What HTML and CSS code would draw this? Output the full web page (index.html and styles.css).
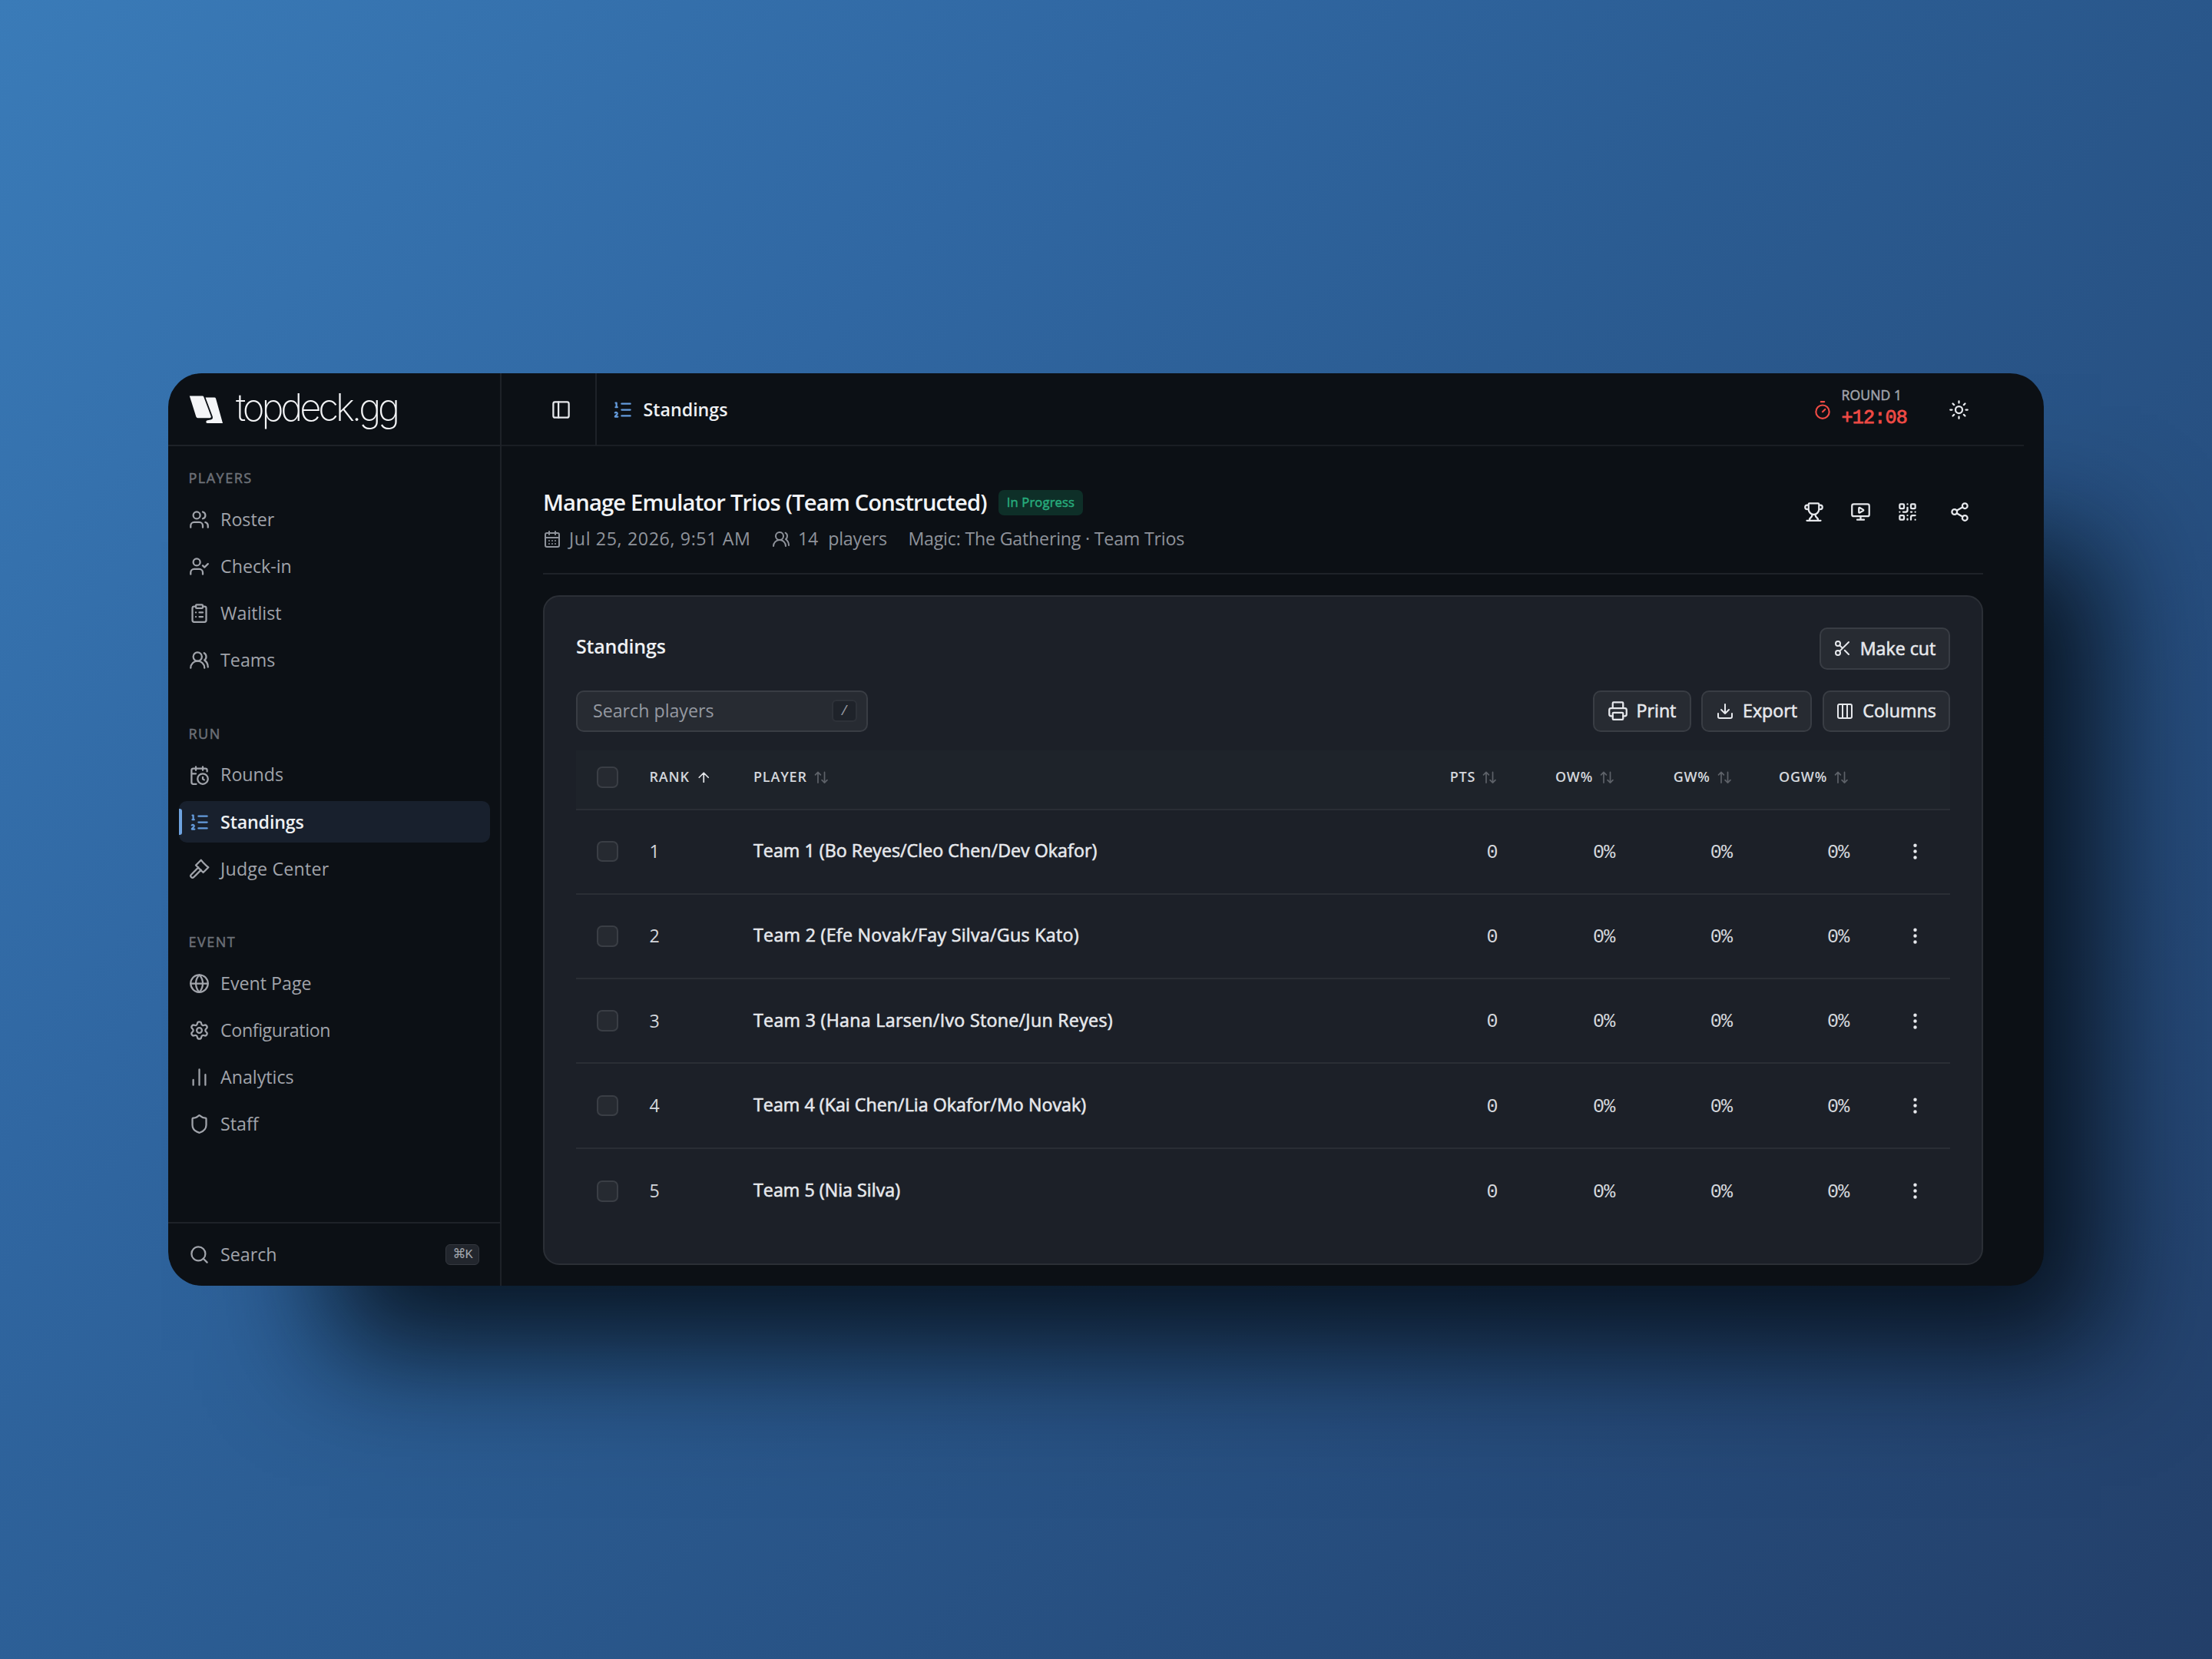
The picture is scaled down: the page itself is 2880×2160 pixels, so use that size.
FILE: index.html
```
<!DOCTYPE html>
<html lang="en">
<head>
    <meta charset="UTF-8">
    <meta name="viewport" content="width=device-width, initial-scale=1.0">
    <title>Standings - topdeck.gg</title>
    <link rel="stylesheet" href="styles.css">
</head>
<body>
    <!-- Icon sprite -->
    <svg class="sprite" xmlns="http://www.w3.org/2000/svg">
        <symbol id="i-users" viewBox="0 0 24 24"><path d="M16 21v-2a4 4 0 0 0-4-4H6a4 4 0 0 0-4 4v2M16 3.13a4 4 0 0 1 0 7.75M22 21v-2a4 4 0 0 0-3-3.87"/><circle cx="9" cy="7" r="4"/></symbol>
        <symbol id="i-user-check" viewBox="0 0 24 24"><path d="m16 11 2 2 4-4M16 21v-2a4 4 0 0 0-4-4H6a4 4 0 0 0-4 4v2"/><circle cx="9" cy="7" r="4"/></symbol>
        <symbol id="i-clipboard" viewBox="0 0 24 24"><rect width="8" height="4" x="8" y="2" rx="1"/><path d="M16 4h2a2 2 0 0 1 2 2v14a2 2 0 0 1-2 2H6a2 2 0 0 1-2-2V6a2 2 0 0 1 2-2h2M12 11h4M12 16h4M8 11h.01M8 16h.01"/></symbol>
        <symbol id="i-teams" viewBox="0 0 24 24"><path d="M18 21a8 8 0 0 0-16 0"/><circle cx="10" cy="8" r="5"/><path d="M22 20c0-3.37-2-6.5-4-8a5 5 0 0 0-.45-8.3"/></symbol>
        <symbol id="i-calendar-clock" viewBox="0 0 24 24"><path d="M16 14v2.2l1.6 1M16 2v4M21 7.5V6a2 2 0 0 0-2-2H5a2 2 0 0 0-2 2v14a2 2 0 0 0 2 2h3.5M3 10h5M8 2v4"/><circle cx="16" cy="16" r="6"/></symbol>
        <symbol id="i-list" viewBox="0 0 24 24"><path d="M11 5h10M11 12h10M11 19h10M4 4h1v5M4 9h2M6.5 20H3.4c0-1 2.6-1.925 2.6-3.5a1.5 1.5 0 0 0-2.6-1.02"/></symbol>
        <symbol id="i-gavel" viewBox="0 0 24 24"><path d="m14 13-8.381 8.38a1 1 0 0 1-3.001-3L11 9.999M15.973 4.027A13 13 0 0 0 14 1.5L8 7.5l8.5 8.5 6-6a13 13 0 0 1-2.5-2z"/></symbol>
        <symbol id="i-globe" viewBox="0 0 24 24"><circle cx="12" cy="12" r="10"/><path d="M12 2a14.5 14.5 0 0 0 0 20 14.5 14.5 0 0 0 0-20M2 12h20"/></symbol>
        <symbol id="i-settings" viewBox="0 0 24 24"><path d="M9.671 4.136a2.34 2.34 0 0 1 4.659 0 2.34 2.34 0 0 0 3.319 1.915 2.34 2.34 0 0 1 2.33 4.033 2.34 2.34 0 0 0 0 3.831 2.34 2.34 0 0 1-2.33 4.033 2.34 2.34 0 0 0-3.319 1.915 2.34 2.34 0 0 1-4.659 0 2.34 2.34 0 0 0-3.32-1.915 2.34 2.34 0 0 1-2.33-4.033 2.34 2.34 0 0 0 0-3.831A2.34 2.34 0 0 1 6.35 6.051a2.34 2.34 0 0 0 3.319-1.915"/><circle cx="12" cy="12" r="3"/></symbol>
        <symbol id="i-chart" viewBox="0 0 24 24"><path d="M5 21v-6M12 21V3M19 21V9"/></symbol>
        <symbol id="i-shield" viewBox="0 0 24 24"><path d="M20 13c0 5-3.5 7.5-7.66 8.95a1 1 0 0 1-.67-.01C7.5 20.5 4 18 4 13V6a1 1 0 0 1 1-1c2 0 4.5-1.2 6.24-2.72a1.17 1.17 0 0 1 1.52 0C14.51 3.81 17 5 19 5a1 1 0 0 1 1 1z"/></symbol>
        <symbol id="i-search" viewBox="0 0 24 24"><path d="m21 21-4.34-4.34"/><circle cx="11" cy="11" r="8"/></symbol>
        <symbol id="i-panel" viewBox="0 0 24 24"><rect width="18" height="18" x="3" y="3" rx="2"/><path d="M9 3v18"/></symbol>
        <symbol id="i-timer" viewBox="0 0 24 24"><path d="M10 2h4M12 14l3-3"/><circle cx="12" cy="14" r="8"/></symbol>
        <symbol id="i-sun" viewBox="0 0 24 24"><circle cx="12" cy="12" r="4"/><path d="M12 2v2M12 20v2M4.93 4.93l1.41 1.41M17.66 17.66l1.41 1.41M2 12h2M20 12h2M6.34 17.66l-1.41 1.41M19.07 4.93l-1.41 1.41"/></symbol>
        <symbol id="i-trophy" viewBox="0 0 24 24"><path d="M10 14.66v1.626a2 2 0 0 1-.976 1.696A5 5 0 0 0 7 21.978M14 14.66v1.626a2 2 0 0 0 .976 1.696A5 5 0 0 1 17 21.978M18 9h1.5a1 1 0 0 0 0-5H18M4 22h16M6 9a6 6 0 0 0 12 0V3a1 1 0 0 0-1-1H7a1 1 0 0 0-1 1zM6 9H4.5a1 1 0 0 1 0-5H6"/></symbol>
        <symbol id="i-monitor" viewBox="0 0 24 24"><path d="M15.033 9.44a.647.647 0 0 1 0 1.12l-4.065 2.352a.645.645 0 0 1-.968-.56V7.648a.645.645 0 0 1 .967-.56zM12 17v4M8 21h8"/><rect x="2" y="3" width="20" height="14" rx="2"/></symbol>
        <symbol id="i-qr" viewBox="0 0 24 24"><rect width="5" height="5" x="3" y="3" rx="1"/><rect width="5" height="5" x="16" y="3" rx="1"/><rect width="5" height="5" x="3" y="16" rx="1"/><path d="M21 16h-3a2 2 0 0 0-2 2v3M21 21v.01M12 7v3a2 2 0 0 1-2 2H7M3 12h.01M12 3h.01M12 16v.01M16 12h1M21 12v.01M12 21v-1"/></symbol>
        <symbol id="i-share" viewBox="0 0 24 24"><circle cx="18" cy="5" r="3"/><circle cx="6" cy="12" r="3"/><circle cx="18" cy="19" r="3"/><path d="m8.59 13.51 6.83 3.98M15.41 6.51l-6.82 3.98"/></symbol>
        <symbol id="i-calendar" viewBox="0 0 24 24"><path d="M8 2v4M16 2v4M3 10h18M8 14h.01M12 14h.01M16 14h.01M8 18h.01M12 18h.01M16 18h.01"/><rect width="18" height="18" x="3" y="4" rx="2"/></symbol>
        <symbol id="i-scissors" viewBox="0 0 24 24"><circle cx="6" cy="6" r="3"/><path d="M8.12 8.12 12 12M20 4 8.12 15.88M14.8 14.8 20 20"/><circle cx="6" cy="18" r="3"/></symbol>
        <symbol id="i-print" viewBox="0 0 24 24"><path d="M6 18H4a2 2 0 0 1-2-2v-5a2 2 0 0 1 2-2h16a2 2 0 0 1 2 2v5a2 2 0 0 1-2 2h-2M6 9V3a1 1 0 0 1 1-1h10a1 1 0 0 1 1 1v6"/><rect x="6" y="14" width="12" height="8" rx="1"/></symbol>
        <symbol id="i-download" viewBox="0 0 24 24"><path d="M12 15V3M21 15v4a2 2 0 0 1-2 2H5a2 2 0 0 1-2-2v-4M7 10l5 5 5-5"/></symbol>
        <symbol id="i-columns" viewBox="0 0 24 24"><rect width="18" height="18" x="3" y="3" rx="2"/><path d="M9 3v18M15 3v18"/></symbol>
        <symbol id="i-arrow-up" viewBox="0 0 24 24"><path d="m5 12 7-7 7 7M12 19V5"/></symbol>
        <symbol id="i-sort" viewBox="0 0 24 24"><path d="m3 8 4-4 4 4M7 4v16M21 16l-4 4-4-4M17 20V4"/></symbol>
        <symbol id="i-dots" viewBox="0 0 24 24"><circle cx="12" cy="12" r="1"/><circle cx="12" cy="5" r="1"/><circle cx="12" cy="19" r="1"/></symbol>
    </svg>

    <div class="window">
        <aside class="sidebar">
            <div class="brand">
                <svg class="brand-mark" viewBox="0 0 44 37"><path d="M0.8 0.5H17.5Q18.8 0.5 19.3 1.8L28.8 27.2Q29 29.3 27.2 29.3H11.5Q9.9 29.3 9.3 27.6Z"/><path d="M21.5 2.5H33.2Q34.5 2.5 35 3.8L44 36H24Q22 36 22.3 33.8Q22.6 32 25.5 32Q32.2 31.6 30.8 27.2Z"/></svg>
                <span class="brand-name">topdeck.gg</span>
            </div>
            <nav class="nav">
                <div class="nav-group">
                    <div class="nav-label">PLAYERS</div>
                    <a class="nav-item"><svg class="icon"><use href="#i-users"/></svg>Roster</a>
                    <a class="nav-item"><svg class="icon"><use href="#i-user-check"/></svg>Check-in</a>
                    <a class="nav-item"><svg class="icon"><use href="#i-clipboard"/></svg>Waitlist</a>
                    <a class="nav-item"><svg class="icon"><use href="#i-teams"/></svg>Teams</a>
                </div>
                <div class="nav-group">
                    <div class="nav-label">RUN</div>
                    <a class="nav-item"><svg class="icon"><use href="#i-calendar-clock"/></svg>Rounds</a>
                    <a class="nav-item active"><svg class="icon"><use href="#i-list"/></svg>Standings</a>
                    <a class="nav-item wide"><svg class="icon"><use href="#i-gavel"/></svg>Judge Center</a>
                </div>
                <div class="nav-group">
                    <div class="nav-label">EVENT</div>
                    <a class="nav-item"><svg class="icon"><use href="#i-globe"/></svg>Event Page</a>
                    <a class="nav-item tight"><svg class="icon"><use href="#i-settings"/></svg>Configuration</a>
                    <a class="nav-item"><svg class="icon"><use href="#i-chart"/></svg>Analytics</a>
                    <a class="nav-item"><svg class="icon"><use href="#i-shield"/></svg>Staff</a>
                </div>
            </nav>
            <div class="sidebar-footer">
                <svg class="icon"><use href="#i-search"/></svg>
                <span>Search</span>
                <kbd class="kbd">⌘K</kbd>
            </div>
        </aside>

        <main class="main">
            <header class="topbar">
                <div class="toggle"><svg class="icon"><use href="#i-panel"/></svg></div>
                <div class="crumb"><svg class="icon"><use href="#i-list"/></svg>Standings</div>
                <div class="round">
                    <svg class="icon"><use href="#i-timer"/></svg>
                    <div class="round-text">
                        <span class="round-label">ROUND 1</span>
                        <span class="round-time">+12:08</span>
                    </div>
                </div>
                <svg class="icon"><use href="#i-sun"/></svg>
            </header>

            <section class="content">
                <div class="page-header">
                    <div class="heading">
                        <div class="title-row">
                            <h1>Manage Emulator Trios (Team Constructed)</h1>
                            <span class="badge">In Progress</span>
                        </div>
                        <div class="meta">
                            <span class="meta-item date"><svg class="icon small"><use href="#i-calendar"/></svg>Jul 25, 2026, 9:51 AM</span>
                            <span class="meta-item count"><svg class="icon small"><use href="#i-teams"/></svg><span>14</span><span>players</span></span>
                            <span class="meta-item">Magic: The Gathering · Team Trios</span>
                        </div>
                    </div>
                    <div class="actions">
                        <span class="action"><svg class="icon"><use href="#i-trophy"/></svg></span>
                        <span class="action"><svg class="icon"><use href="#i-monitor"/></svg></span>
                        <span class="action"><svg class="icon"><use href="#i-qr"/></svg></span>
                        <span class="action last"><svg class="icon"><use href="#i-share"/></svg></span>
                    </div>
                </div>

                <div class="card">
                    <div class="card-header">
                        <h2>Standings</h2>
                        <button class="btn"><svg class="icon small"><use href="#i-scissors"/></svg>Make cut</button>
                    </div>
                    <div class="toolbar">
                        <div class="search">Search players<kbd class="slash">/</kbd></div>
                        <div class="btn-group">
                            <button class="btn print"><svg class="icon"><use href="#i-print"/></svg>Print</button>
                            <button class="btn export"><svg class="icon small"><use href="#i-download"/></svg>Export</button>
                            <button class="btn columns"><svg class="icon small"><use href="#i-columns"/></svg>Columns</button>
                        </div>
                    </div>

                    <div class="table">
                        <div class="row head">
                            <span class="check"></span>
                            <span class="th">RANK<svg class="sort on"><use href="#i-arrow-up"/></svg></span>
                            <span class="th">PLAYER<svg class="sort"><use href="#i-sort"/></svg></span>
                            <span class="th num">PTS<svg class="sort"><use href="#i-sort"/></svg></span>
                            <span class="th num">OW%<svg class="sort"><use href="#i-sort"/></svg></span>
                            <span class="th num">GW%<svg class="sort"><use href="#i-sort"/></svg></span>
                            <span class="th num">OGW%<svg class="sort"><use href="#i-sort"/></svg></span>
                            <span></span>
                        </div>
                        <div class="row">
                            <span class="check"></span><span class="rank">1</span><span class="player snug">Team 1 (Bo Reyes/Cleo Chen/Dev Okafor)</span>
                            <span class="val">0</span><span class="val">0%</span><span class="val">0%</span><span class="val">0%</span>
                            <svg class="icon more"><use href="#i-dots"/></svg>
                        </div>
                        <div class="row">
                            <span class="check"></span><span class="rank">2</span><span class="player">Team 2 (Efe Novak/Fay Silva/Gus Kato)</span>
                            <span class="val">0</span><span class="val">0%</span><span class="val">0%</span><span class="val">0%</span>
                            <svg class="icon more"><use href="#i-dots"/></svg>
                        </div>
                        <div class="row">
                            <span class="check"></span><span class="rank">3</span><span class="player">Team 3 (Hana Larsen/Ivo Stone/Jun Reyes)</span>
                            <span class="val">0</span><span class="val">0%</span><span class="val">0%</span><span class="val">0%</span>
                            <svg class="icon more"><use href="#i-dots"/></svg>
                        </div>
                        <div class="row">
                            <span class="check"></span><span class="rank">4</span><span class="player snug">Team 4 (Kai Chen/Lia Okafor/Mo Novak)</span>
                            <span class="val">0</span><span class="val">0%</span><span class="val">0%</span><span class="val">0%</span>
                            <svg class="icon more"><use href="#i-dots"/></svg>
                        </div>
                        <div class="row">
                            <span class="check"></span><span class="rank">5</span><span class="player snug">Team 5 (Nia Silva)</span>
                            <span class="val">0</span><span class="val">0%</span><span class="val">0%</span><span class="val">0%</span>
                            <svg class="icon more"><use href="#i-dots"/></svg>
                        </div>
                    </div>
                </div>
            </section>
        </main>
    </div>
</body>
</html>
```
FILE: styles.css
```
/* General Styles */
* {
    box-sizing: border-box;
}

body {
    margin: 0;
    width: 2880px;
    height: 2160px;
    display: flex;
    align-items: center;
    justify-content: center;
    overflow: hidden;
    font-family: "Open Sans", "Noto Sans", sans-serif;
    font-size: 23.2px;
    line-height: 1;
    color: #e6e8ec;
    background: linear-gradient(135deg, #3a7bb8 0%, #3067a2 30%, #2b5c92 48%, #264c7c 76%, #233f69 100%);
}

h1, h2 {
    margin: 0;
    font-weight: 600;
}

.sprite {
    display: none;
}

.icon {
    width: 27px;
    height: 27px;
    flex: none;
    fill: none;
    stroke: currentColor;
    stroke-width: 2;
    stroke-linecap: round;
    stroke-linejoin: round;
}

.icon.small {
    width: 24px;
    height: 24px;
}

/* Window */
.window {
    display: flex;
    width: 2442px;
    height: 1188px;
    border-radius: 44px;
    background: #0c1015;
    overflow: hidden;
    box-shadow: 142px 152px 146px -68px rgba(2, 8, 14, 0.84);
}

/* Sidebar */
.sidebar {
    width: 434px;
    display: flex;
    flex-direction: column;
    border-right: 2px solid #1e2228;
}

.brand {
    height: 95px;
    display: flex;
    align-items: center;
    padding: 0 0 0 27px;
    border-bottom: 2px solid #1e2228;
}

.brand-mark {
    width: 44px;
    height: 37px;
    margin-top: 1px;
    fill: #f4f5f7;
}

.brand-name {
    margin: -5px 0 0 17px;
    font-family: Inter, sans-serif;
    font-weight: 200;
    font-size: 49px;
    letter-spacing: -4.1px;
    color: #f4f5f7;
}

.nav {
    flex: 1;
    padding: 14px 13px 0 14px;
    display: flex;
    flex-direction: column;
    gap: 40.7px;
}

.nav-group {
    display: flex;
    flex-direction: column;
    gap: 6.8px;
}

.nav-label {
    height: 54.3px;
    margin-bottom: -6.8px;
    padding-left: 12.5px;
    display: flex;
    align-items: center;
    font-size: 18px;
    letter-spacing: 1.5px;
    -webkit-text-stroke: 0.5px currentColor;
    color: #6d7178;
}

.nav-item {
    height: 54.3px;
    padding-left: 12.5px;
    display: flex;
    align-items: center;
    gap: 14.6px;
    border-radius: 10px;
    color: #a1a4ab;
}

.nav-item.tight {
    letter-spacing: -0.38px;
}

.nav-item.wide {
    letter-spacing: 0.2px;
}

.nav-item.active {
    position: relative;
    background: #18202d;
    color: #eef0f3;
    font-weight: 600;
    letter-spacing: -0.15px;
}

.nav-item.active .icon,
.crumb .icon {
    color: #649bdc;
}

.nav-item.active::before {
    content: "";
    position: absolute;
    left: 0;
    top: 10px;
    width: 4px;
    height: 34px;
    border-radius: 0 3px 3px 0;
    background: #6fa3e0;
}

.sidebar-footer {
    height: 83px;
    padding: 0 27px 0 26.5px;
    display: flex;
    align-items: center;
    gap: 14.6px;
    border-top: 2px solid #1e2228;
    color: #a1a4ab;
}

.kbd {
    margin-left: auto;
    width: 44px;
    height: 27px;
    display: flex;
    align-items: center;
    justify-content: center;
    border: 1px solid #34383f;
    border-radius: 6px;
    background: #22262d;
    font-family: "Liberation Mono", "DejaVu Sans", monospace;
    font-size: 17px;
    letter-spacing: -1px;
    color: #a1a4ab;
}

/* Top bar */
.main {
    flex: 1;
}

.topbar {
    height: 95px;
    margin-right: 26px;
    padding: 2px 71px 0 0;
    display: flex;
    align-items: center;
    border-bottom: 2px solid #1a1e24;
}

.toggle {
    width: 124px;
    height: 95px;
    margin-top: -2px;
    padding: 2px 0 0 64px;
    display: flex;
    align-items: center;
    border-right: 2px solid #1e2228;
}

.crumb {
    display: flex;
    align-items: center;
    gap: 13.6px;
    padding-left: 20px;
    font-weight: 600;
    color: #eef0f3;
}

.round {
    margin-left: auto;
    margin-right: 54px;
    display: flex;
    align-items: center;
    gap: 11px;
    color: #ef4b45;
}

.round .icon {
    width: 26px;
    height: 26px;
}

.round-text {
    margin-top: -4px;
    display: flex;
    flex-direction: column;
    gap: 9px;
}

.round-label {
    font-size: 17.6px;
    letter-spacing: 0.1px;
    -webkit-text-stroke: 0.5px currentColor;
    color: #a1a4ab;
}

.round-time {
    font-family: "Liberation Mono", monospace;
    font-size: 25px;
    letter-spacing: -0.75px;
    -webkit-text-stroke: 0.8px currentColor;
}

/* Page header */
.content {
    padding: 0 79.5px 0 54px;
}

.page-header {
    height: 167px;
    display: flex;
    justify-content: space-between;
    border-bottom: 2px solid #1e2228;
}

.heading {
    padding-top: 57px;
}

.title-row {
    display: flex;
    align-items: center;
    gap: 15px;
    height: 33px;
}

h1 {
    font-size: 29.2px;
    letter-spacing: -0.83px;
    color: #f2f4f7;
}

.badge {
    height: 33px;
    padding: 0 11px;
    display: flex;
    align-items: center;
    border-radius: 7px;
    background: #0e2f28;
    font-size: 16.6px;
    letter-spacing: 0.15px;
    -webkit-text-stroke: 0.5px currentColor;
    color: #27ab7c;
}

.meta {
    margin-top: 19px;
    height: 24px;
    display: flex;
    align-items: center;
    gap: 27.5px;
    color: #8f939b;
}

.meta-item {
    display: flex;
    align-items: center;
    gap: 10px;
    letter-spacing: -0.2px;
}

.meta-item.date {
    letter-spacing: 0.63px;
}

.meta-item.count span + span {
    margin-left: 3px;
}

.actions {
    padding-top: 54.5px;
    display: flex;
}

.action {
    width: 61px;
    height: 61px;
    display: flex;
    align-items: center;
    justify-content: center;
}

.action.last {
    margin-left: 7px;
}

/* Card */
.card {
    margin-top: 27px;
    height: 872px;
    padding: 40px 41px 0;
    border: 2px solid #2b2f36;
    border-radius: 21px;
    background: #1c2028;
}

.card-header,
.toolbar {
    display: flex;
    justify-content: space-between;
}

.toolbar {
    margin-top: 27px;
}

h2 {
    padding-top: 12px;
    font-size: 25px;
    letter-spacing: -0.2px;
    color: #eef0f3;
}

.btn {
    height: 54.5px;
    width: 170px;
    padding: 0;
    display: flex;
    align-items: center;
    justify-content: center;
    gap: 11px;
    border: 2px solid #393d44;
    border-radius: 10px;
    background: #272b32;
    font: inherit;
    -webkit-text-stroke: 0.6px currentColor;
    color: #e6e8ec;
}

.btn-group {
    display: flex;
    gap: 13.5px;
}

.btn.print {
    width: 128px;
}

.btn.export {
    width: 144px;
}

.btn.columns {
    width: 166px;
}

.search {
    width: 380px;
    height: 54.5px;
    padding: 0 12px 0 20px;
    display: flex;
    align-items: center;
    justify-content: space-between;
    border: 2px solid #393d44;
    border-radius: 10px;
    background: #272b32;
    color: #9599a1;
}

.slash {
    width: 33px;
    height: 29px;
    display: flex;
    align-items: center;
    justify-content: center;
    border: 2px solid #2e3239;
    border-radius: 6px;
    background: #1f232a;
    font-family: "Liberation Mono", monospace;
    font-size: 18px;
}

/* Table */
.table {
    margin-top: 24px;
}

.row {
    display: grid;
    grid-template-columns: 68.5px 135.5px 1fr 100px 152.8px 152.7px 152.3px 131px;
    align-items: center;
    height: 110.3px;
    padding-left: 27px;
    border-bottom: 2px solid #2a2e35;
}

.row:last-child {
    border-bottom: none;
}

.row.head {
    height: 77.5px;
    padding-bottom: 6px;
    background: #1e232a;
}

.check {
    width: 27.5px;
    height: 27.5px;
    border: 2px solid #3a3e45;
    border-radius: 7px;
    background: #262a31;
}

.th {
    display: flex;
    align-items: center;
    gap: 8px;
    margin-top: -2px;
    font-size: 18px;
    font-weight: 600;
    letter-spacing: 0.8px;
    color: #d4d7dc;
}

.th.num,
.val {
    justify-self: end;
}

.sort {
    width: 20.5px;
    height: 20.5px;
    margin-top: 2px;
    fill: none;
    stroke: #5d6168;
    stroke-width: 2;
    stroke-linecap: round;
    stroke-linejoin: round;
}

.sort.on {
    stroke: #e6e8ec;
}

.rank {
    color: #d4d7dc;
}

.player {
    margin-top: -2px;
    letter-spacing: 0.3px;
    -webkit-text-stroke: 0.6px currentColor;
}

.player.snug {
    letter-spacing: 0.05px;
}

.val {
    margin-top: 3px;
    font-family: "Liberation Mono", monospace;
    font-size: 25px;
    letter-spacing: -0.75px;
    color: #d4d7dc;
}

.more {
    margin-left: 72.5px;
}
```
